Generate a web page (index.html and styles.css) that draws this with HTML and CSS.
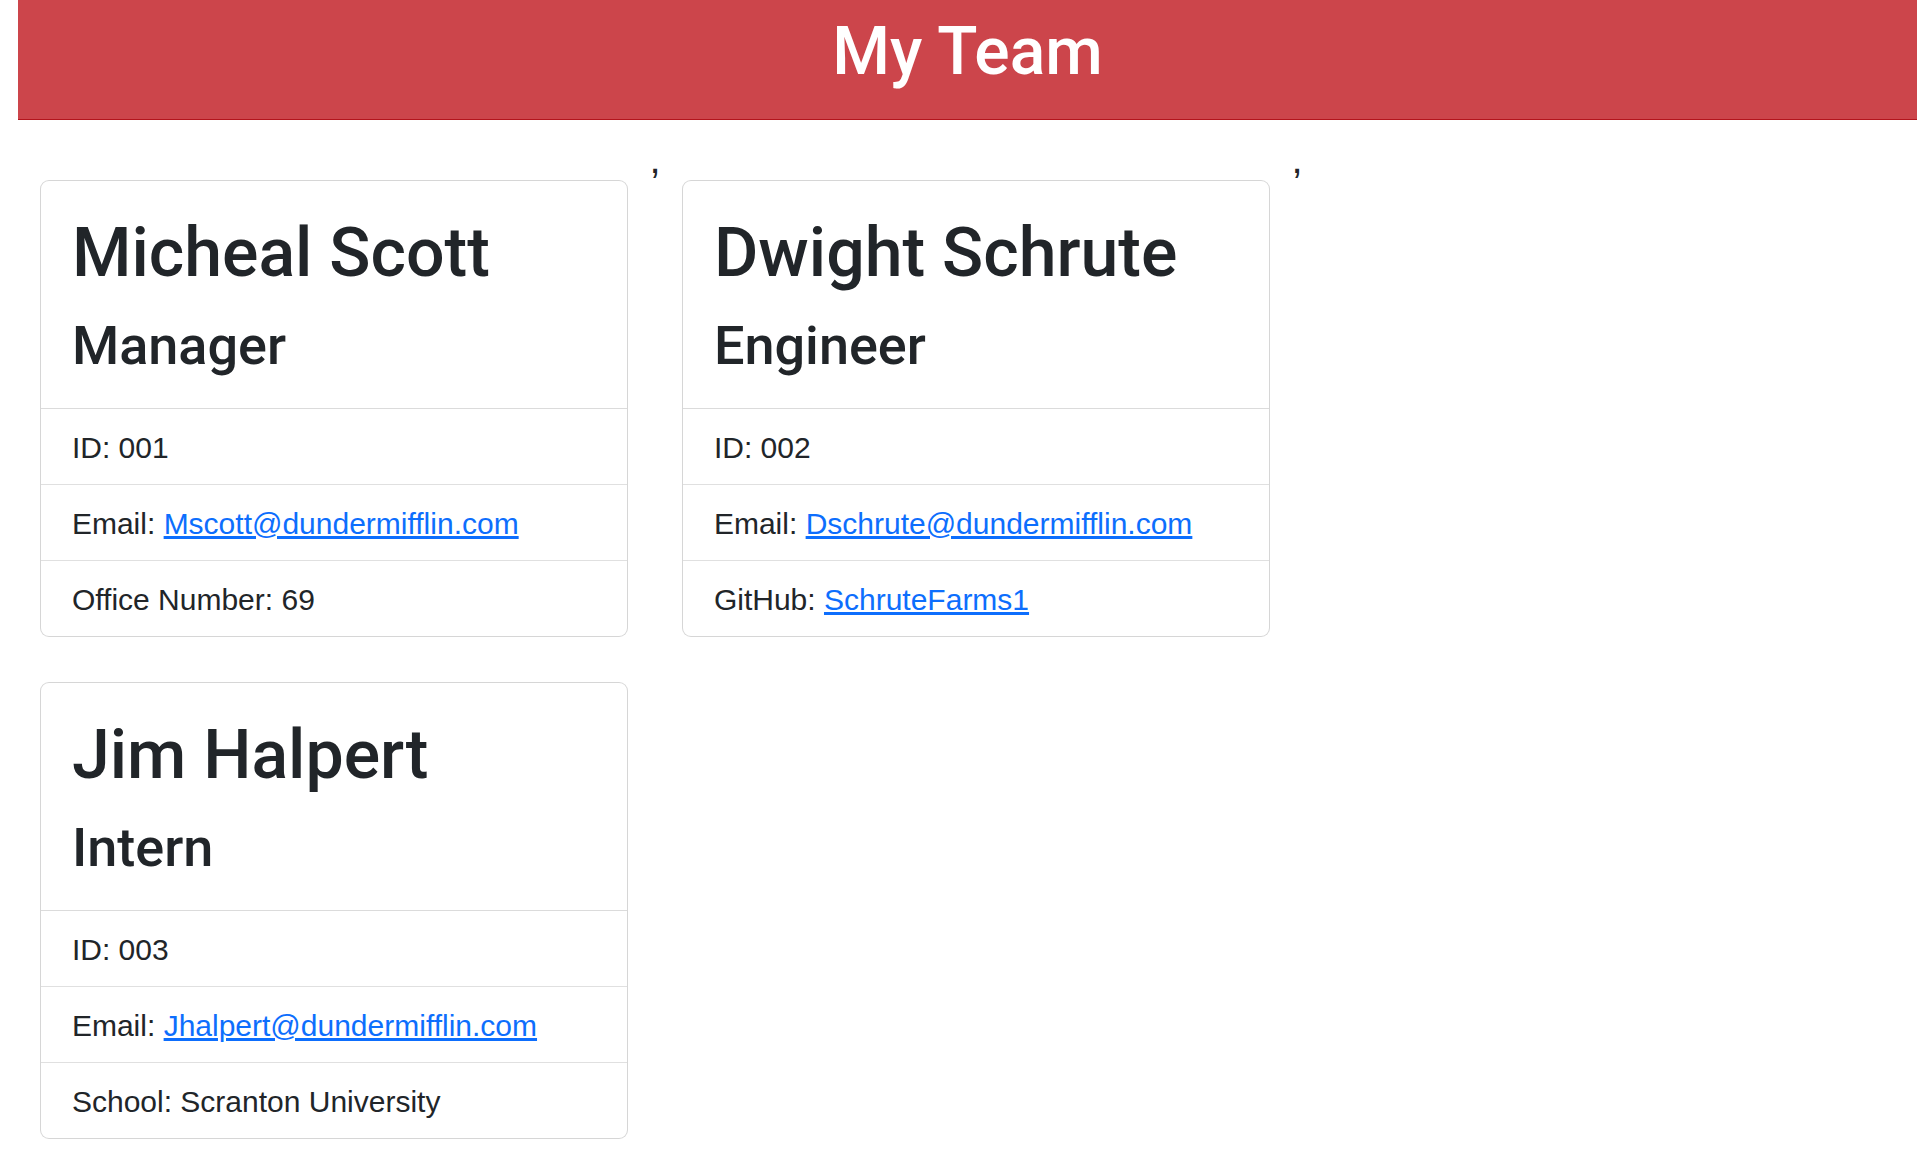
FILE: index.html
```html
<!DOCTYPE html>
<html lang="en">
<head>
<meta charset="utf-8">
<title>My Team</title>
<link rel="stylesheet" href="styles.css">
</head>
<body>
<header class="banner">
  <h1 class="banner-title">My Team</h1>
</header>
<main class="team">
  <div class="card">
    <div class="card-head">
      <h2 class="card-name">Micheal Scott</h2>
      <h3 class="card-role">Manager</h3>
    </div>
    <ul class="card-list">
      <li class="card-item">ID: 001</li>
      <li class="card-item">Email: <a class="card-link" href="mailto:Mscott@dundermifflin.com">Mscott@dundermifflin.com</a></li>
      <li class="card-item">Office Number: 69</li>
    </ul>
  </div><span class="sep">,</span><div class="card">
    <div class="card-head">
      <h2 class="card-name">Dwight Schrute</h2>
      <h3 class="card-role">Engineer</h3>
    </div>
    <ul class="card-list">
      <li class="card-item">ID: 002</li>
      <li class="card-item">Email: <a class="card-link" href="mailto:Dschrute@dundermifflin.com">Dschrute@dundermifflin.com</a></li>
      <li class="card-item">GitHub: <a class="card-link" href="#">SchruteFarms1</a></li>
    </ul>
  </div><span class="sep">,</span><div class="card">
    <div class="card-head">
      <h2 class="card-name">Jim Halpert</h2>
      <h3 class="card-role">Intern</h3>
    </div>
    <ul class="card-list">
      <li class="card-item">ID: 003</li>
      <li class="card-item">Email: <a class="card-link" href="mailto:Jhalpert@dundermifflin.com">Jhalpert@dundermifflin.com</a></li>
      <li class="card-item">School: Scranton University</li>
    </ul>
  </div>
</main>
</body>
</html>
```

FILE: styles.css
```css
html, body {
  margin: 0;
  padding: 0;
  background: #ffffff;
}

body {
  font-family: "Liberation Sans", Arial, sans-serif;
  color: #212529;
}

.banner {
  margin: 0 5px 0 18px;
  height: 107px;
  padding-top: 12px;
  background: #cc454b;
  border-bottom: 1px solid #b3141c;
  text-align: center;
}

.banner-title {
  margin: 0;
  font-family: Roboto, "Liberation Sans", sans-serif;
  font-size: 66px;
  line-height: 1.2;
  font-weight: 500;
  color: #ffffff;
}

.team {
  display: flex;
  flex-wrap: wrap;
  align-items: flex-start;
  margin: 30px 5px 0 18.5px;
}

.card {
  width: 588px;
  box-sizing: border-box;
  margin: 30px 21.45px 15px;
  border: 1px solid rgba(0, 0, 0, 0.16);
  border-radius: 9px;
  overflow: hidden;
  background: #ffffff;
}

.sep {
  padding-top: 5px;
  font-size: 40px;
  line-height: 8px;
  color: #212529;
}

.card-head {
  padding: 32.4px 30px 29.3px 31px;
  border-bottom: 1px solid rgba(0, 0, 0, 0.14);
}

.card-name {
  margin: 0 0 18.9px;
  font-family: Roboto, "Liberation Sans", sans-serif;
  font-size: 68px;
  line-height: 1.2;
  font-weight: 500;
}

.card-role {
  margin: 0;
  font-family: Roboto, "Liberation Sans", sans-serif;
  font-size: 54px;
  line-height: 1.2;
  font-weight: 500;
}

.card-list {
  list-style: none;
  margin: 0;
  padding: 0;
}

.card-item {
  padding: 16px 30px 14px 31px;
  font-size: 30px;
  line-height: 45px;
  border-bottom: 1px solid rgba(0, 0, 0, 0.12);
}

.card-item:last-child {
  border-bottom: none;
}

.card-link {
  color: #0d6efd;
  text-decoration: underline;
}
```
